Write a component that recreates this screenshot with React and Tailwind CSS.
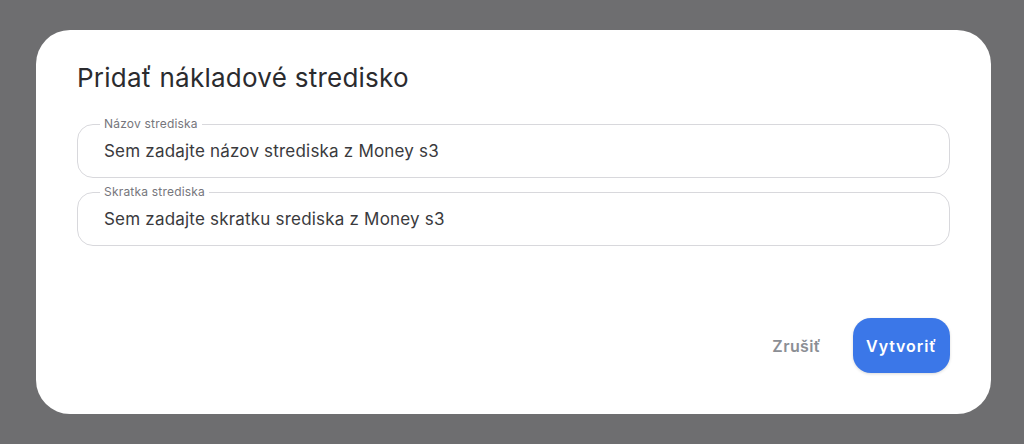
export default function App() {
  const font = { fontFamily: 'Inter, "Noto Sans", sans-serif' }

  return (
    <div className="min-h-[444px] w-full bg-[#6e6e70] pl-[36px] pr-[33px] pt-[30px] pb-[31px]" style={font}>
      <div className="flex flex-col rounded-[34px] bg-white px-[41px] pt-[28px] pb-[41px]">
        <h2 className="text-[26px] leading-[40px] font-normal text-[#2b2b2e] tracking-[0.25px]">
          Pridať nákladové stredisko
        </h2>

        <div className="mt-[19px] flex flex-col gap-[7px]">
          <fieldset className="rounded-[16px] border border-[#d8d8dc] px-[22px] pb-[14px] pt-[8px]">
            <legend className="px-1 text-[12px] leading-[14px] tracking-[0.2px] text-[#76767c]">Názov strediska</legend>
            <input
              className="w-full bg-transparent px-1 text-[17px] leading-[22px] tracking-[0.2px] text-[#3a3a3d] outline-none placeholder:text-[#3a3a3d]"
              placeholder="Sem zadajte názov strediska z Money s3"
            />
          </fieldset>
          <fieldset className="rounded-[16px] border border-[#d8d8dc] px-[22px] pb-[14px] pt-[8px]">
            <legend className="px-1 text-[12px] leading-[14px] tracking-[0.2px] text-[#76767c]">Skratka strediska</legend>
            <input
              className="w-full bg-transparent px-1 text-[17px] leading-[22px] tracking-[0.2px] text-[#3a3a3d] outline-none placeholder:text-[#3a3a3d]"
              placeholder="Sem zadajte skratku srediska z Money s3"
            />
          </fieldset>
        </div>

        <div className="mt-[72px] flex items-center justify-end gap-[32px]">
          <button className="text-[16px] font-semibold tracking-[0.4px] text-[#8b8e94]">Zrušiť</button>
          <button className="h-[55px] w-[97px] rounded-[18px] bg-[#3b77e8] text-[16px] font-semibold tracking-[0.9px] text-white shadow-[0_1px_3px_rgba(0,0,0,0.15)]">
            Vytvoriť
          </button>
        </div>
      </div>
    </div>
  )
}
